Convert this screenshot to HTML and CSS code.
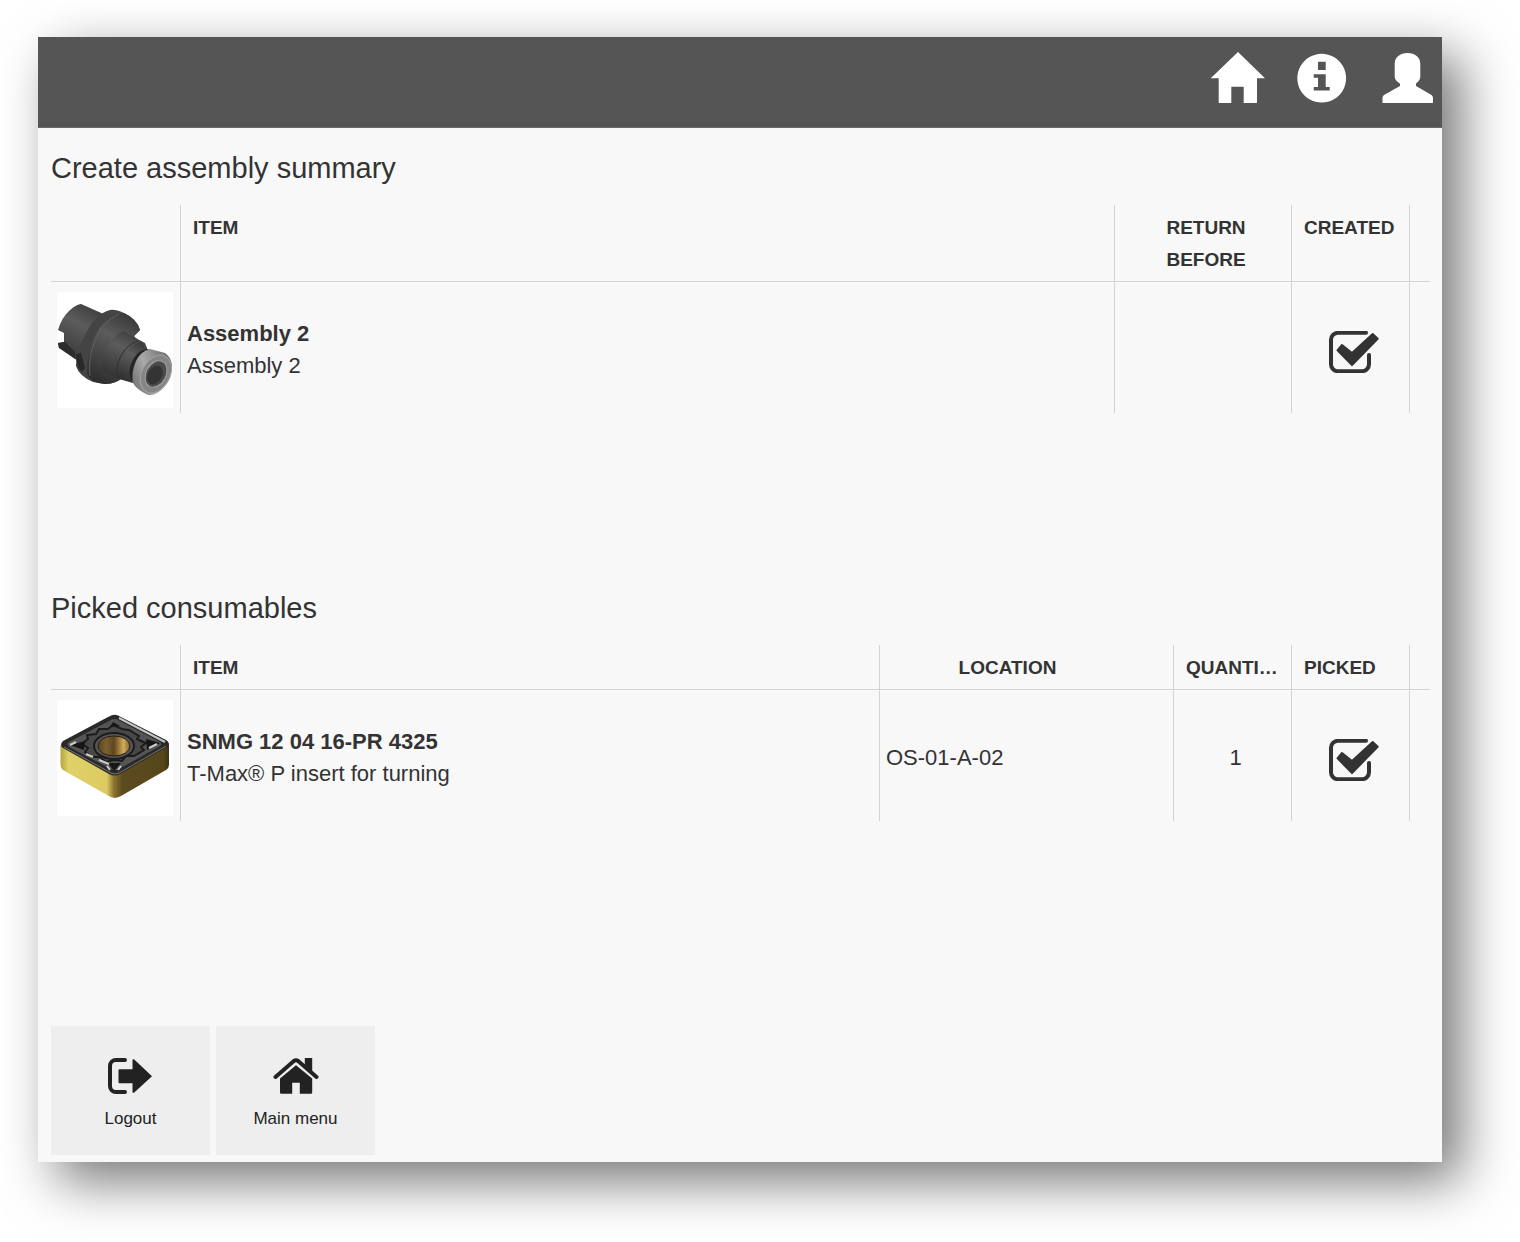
FILE: index.html
```html
<!DOCTYPE html>
<html lang="en">
  <head>
    <meta charset="UTF-8" />
    <meta name="viewport" content="width=device-width, initial-scale=1.0" />
    <title>Create assembly summary</title>
    <link rel="stylesheet" href="styles.css" />
  </head>
  <body>
    <div class="panel">
      <header class="topbar">
        <a href="#" aria-label="Home">
          <svg width="54" height="52" viewBox="0 0 54 52">
            <path d="M28 0L55 26.300H47V51H33.700V34.700H21.300V51H8.700V26.300H.7z" />
          </svg>
        </a>
        <a href="#" aria-label="Information">
          <svg width="50" height="52" viewBox="0 0 50 52">
            <path
              fill-rule="evenodd"
              d="M23.700 1.800a24.400 24.400 0 1 0 .01 0zM20 9.800h7.700V18H20zM15.700 22.300h12V35h4v3.400h-16V35H20v-9.300h-4.300z"
            />
          </svg>
        </a>
        <a href="#" aria-label="User">
          <svg width="51" height="52" viewBox="0 0 51 52">
            <path
              d="M25.500 1C33 1 38.300 5 38.300 12V24C38.300 28 36 30 34 31.500V34L49.500 43Q51 44 51 46V51H.5V46Q.5 44 2 43L18 34V31.500C15.500 30 12.700 28 12.700 24V12C12.700 5 18 1 25.500 1z"
            />
          </svg>
        </a>
      </header>

      <main class="content">
        <section class="summary">
          <h2>Create assembly summary</h2>
          <table>
            <colgroup>
              <col class="col-image" />
              <col />
              <col class="col-return" />
              <col class="col-check" />
              <col class="col-end" />
            </colgroup>
            <thead>
              <tr>
                <th></th>
                <th>ITEM</th>
                <th class="center">RETURN BEFORE</th>
                <th>CREATED</th>
                <th></th>
              </tr>
            </thead>
            <tbody>
              <tr>
                <td>
                  <svg class="picture" viewBox="0 0 116 116" role="img" aria-label="Assembly 2">
                    <defs>
                      <linearGradient id="steel" x1="0.7" y1="0" x2="0.3" y2="1">
                        <stop offset="0" stop-color="#393939" />
                        <stop offset="0.35" stop-color="#5c5c5c" />
                        <stop offset="1" stop-color="#2e2e2e" />
                      </linearGradient>
                      <linearGradient id="ring" x1="0" y1="0.7" x2="1" y2="0.2">
                        <stop offset="0" stop-color="#777" />
                        <stop offset="0.4" stop-color="#aaa" />
                        <stop offset="1" stop-color="#666" />
                      </linearGradient>
                    </defs>
                    <path fill="url(#steel)" d="M24 12L42 20L56 26L40 80L18 67L17 62L2 56L1 51L7 50V41L1 38Q5 25 12 19Q18 13 24 12z" />
                    <path fill="#2c2c2c" d="M1 51L8 50L18 60V67L2 56z" />
                    <path fill="#444" d="M53 18Q38 22 29 41Q19 60 19 74Q22 84 36 90L48 92Q60 92 67 84L80 48L77 44L83 38Q80 27 67 21Q58 17 53 18z" />
                    <path fill="url(#steel)" d="M60 22Q46 27 37 46Q29 65 30 82Q34 91 48 92Q60 92 67 84L80 48L77 44L83 38Q80 27 67 21z" />
                    <path fill="none" stroke="#5e5e5e" d="M62 22Q47 28 38 48Q31 66 33 84" />
                    <path fill="#292929" d="M19 62L24 61L28 76L25 80Q19 76 19 62z" />
                    <path fill="url(#steel)" d="M66 39L88 51L90 56L76 90L69 88L59 86L46 79Q42 72 48 59Q55 44 66 39z" />
                    <path fill="none" stroke="#303030" d="M81 49Q66 54 61 71Q58 80 61 87" />
                    <path fill="url(#steel)" d="M84 50Q70 54 65 68Q60 79 62 87L76 91L91 58z" />
                    <path fill="#252525" d="M92 57Q80 57 74 72Q71 81 74 87L78 91L80 73z" />
                    <path fill="url(#ring)" d="M93 57Q84 59 79 69Q74 80 76 91Q79 97 90 102.500Q98 105 106 96Q114 85 115 73Q114 65 108 61z" />
                    <ellipse cx="99" cy="82" rx="14" ry="20" transform="rotate(28 99 82)" fill="#858585" stroke="#a2a2a2" />
                    <ellipse cx="99" cy="82" rx="10" ry="14" transform="rotate(28 99 82)" fill="#4a4a4a" stroke="#a2a2a2" />
                    <ellipse cx="98" cy="83" rx="7" ry="10" transform="rotate(28 98 83)" fill="#343434" />
                  </svg>
                </td>
                <td><strong>Assembly 2</strong><br />Assembly 2</td>
                <td></td>
                <td class="center">
                  <label class="check">
                    <input type="checkbox" aria-label="Created" checked />
                    <svg width="50" height="42" viewBox="0 0 50 42">
                      <path class="box" d="M37 1.800H9A7 7 0 0 0 2 9V33A7 7 0 0 0 9 40.200H33A7 7 0 0 0 40 33V24" />
                      <path class="tick" d="M13 14L23 22L43.700 3L48.700 7.700L23 34L8.500 19.300z" />
                    </svg>
                  </label>
                </td>
                <td></td>
              </tr>
            </tbody>
          </table>
        </section>

        <section class="summary">
          <h2>Picked consumables</h2>
          <table>
            <colgroup>
              <col class="col-image" />
              <col />
              <col class="col-location" />
              <col class="col-check" />
              <col class="col-check" />
              <col class="col-end" />
            </colgroup>
            <thead>
              <tr>
                <th></th>
                <th>ITEM</th>
                <th class="location">LOCATION</th>
                <th class="cut">QUANTITY</th>
                <th>PICKED</th>
                <th></th>
              </tr>
            </thead>
            <tbody>
              <tr>
                <td>
                  <svg class="picture" viewBox="0 0 116 116" role="img" aria-label="Turning insert">
                    <defs>
                      <linearGradient id="gold-left" x1="0" y1="0" x2="1" y2="0">
                        <stop offset="0" stop-color="#b9a642" />
                        <stop offset="0.15" stop-color="#dfd068" />
                        <stop offset="0.85" stop-color="#dccb62" />
                        <stop offset="1" stop-color="#806624" />
                      </linearGradient>
                      <linearGradient id="gold-right" x1="0" y1="0" x2="1" y2="0">
                        <stop offset="0" stop-color="#8a7234" />
                        <stop offset="0.15" stop-color="#5d4b20" />
                        <stop offset="0.9" stop-color="#554719" />
                        <stop offset="1" stop-color="#3b3218" />
                      </linearGradient>
                      <linearGradient id="bore" x1="0" y1="0" x2="1" y2="0">
                        <stop offset="0" stop-color="#5a451c" />
                        <stop offset="0.25" stop-color="#7b6130" />
                        <stop offset="0.5" stop-color="#60461f" />
                        <stop offset="0.8" stop-color="#d2ac58" />
                        <stop offset="1" stop-color="#7c6228" />
                      </linearGradient>
                    </defs>
                    <path fill="url(#gold-left)" d="M3.500 45L58 74V98Q54 98 50 95L6 70Q3.500 68 3.500 65z" />
                    <path fill="url(#gold-right)" d="M57 74L112 43V65Q112 68 109 70L64 96Q60 98 57 98z" />
                    <path fill="#292929" d="M52 16.500Q57 13.500 62 16L109 40Q114 43 110 47L63 74Q58 77 52 74L6 48Q2 45 6 41z" />
                    <path fill="#555" d="M54 20Q57 18 61 20L103 42Q106 44 103 46L62 69Q58 71 54 69L12 47Q9 44 12 42z" />
                    <path fill="none" stroke="#c4c4c4" stroke-width="2" d="M62 18L108 42" />
                    <path fill="none" stroke="#777" d="M7 47L54 73Q58 75 62 73L109 46" />
                    <path fill="#484848" stroke="#1c1c1c" stroke-width="2" d="M42 29L51 29L56 25L65 29L72 30L82 36L80 39L89 43L84 47L87 50L77 56L69 56L65 61L57 60L49 62L43 57L35 57L28 52L31 48L25 44L31 39L30 35L39 34z" />
                    <path fill="#161616" d="M56 22L63 26L53 27zM13 45L28 41L27 50zM103 43L89 39L90 50zM57 71L51 63L64 63z" />
                    <path fill="none" stroke="#ccc" stroke-width="2" d="M29 54L36 57M42 60L52 64M50 66L53 70M64 66L61 70M13 45L19 42M92 48L100 44" />
                    <ellipse cx="57" cy="46" rx="20" ry="13" fill="#555" stroke="#1c1c1c" stroke-width="2" />
                    <ellipse cx="57" cy="46" rx="16" ry="10" fill="url(#bore)" stroke="#2b2112" />
                  </svg>
                </td>
                <td><strong>SNMG 12 04 16-PR 4325</strong><br />T-Max® P insert for turning</td>
                <td>OS-01-A-02</td>
                <td class="center">1</td>
                <td class="center">
                  <label class="check">
                    <input type="checkbox" aria-label="Picked" checked />
                    <svg width="50" height="42" viewBox="0 0 50 42">
                      <path class="box" d="M37 1.800H9A7 7 0 0 0 2 9V33A7 7 0 0 0 9 40.200H33A7 7 0 0 0 40 33V24" />
                      <path class="tick" d="M13 14L23 22L43.700 3L48.700 7.700L23 34L8.500 19.300z" />
                    </svg>
                  </label>
                </td>
                <td></td>
              </tr>
            </tbody>
          </table>
        </section>

        <div class="actions">
          <button type="button">
            <svg width="46" height="36" viewBox="0 0 46 36">
              <path class="line" d="M17 2H8A6 6 0 0 0 2 8V28A6 6 0 0 0 8 34H17" />
              <path d="M10.500 12.300Q10.500 11.300 11.500 11.300H24.500V1.500L26 1.300L44 18.300L26 34.700L24.500 34.500V25.300H11.500Q10.500 25.300 10.500 24.300z" />
            </svg>
            Logout
          </button>
          <button type="button">
            <svg width="46" height="36" viewBox="0 0 46 36">
              <path class="line" d="M2.500 19L20.800 3Q23 1.500 25.200 3L43.500 19" />
              <path d="M31.800 0H39.200V14L31.800 8zM23 7.300L39.200 20.500V34.500Q39.200 35.700 38 35.700H26.800V24.700H19.200V35.700H8.200Q7 35.700 7 34.500V20.500z" />
            </svg>
            Main menu
          </button>
        </div>
      </main>
    </div>
  </body>
</html>
```
FILE: styles.css
```css
* {
  box-sizing: border-box;
}

body {
  margin: 0;
  padding: 37px 78px 80px 38px;
  font-family: "Liberation Sans", Arial, Helvetica, sans-serif;
  font-size: 22px;
  line-height: 32px;
  color: #333;
  background: #fff;
}

.panel {
  background: #f8f8f8;
  box-shadow: 19px 19px 50px rgba(0, 0, 0, 0.54);
}

/* Top bar */
.topbar {
  display: flex;
  justify-content: flex-end;
  gap: 34px;
  height: 91px;
  padding: 15px 9px 0;
  background: #555;
  border-bottom: 1px solid #6e696b;
}
.topbar svg {
  display: block;
  overflow: visible;
  fill: #fff;
}

.content {
  padding: 18px 12px 7px 13px;
}

/* Tables */
.summary {
  min-height: 440px;
}
.summary h2 {
  margin: 0 0 17px;
  padding-top: 2px;
  font-size: 29px;
  font-weight: 400;
  line-height: 40px;
}
table {
  width: 100%;
  table-layout: fixed;
  border-spacing: 0;
}
.col-image {
  width: 130px;
}
.col-return {
  width: 177px;
}
.col-location {
  width: 294px;
}
.col-check {
  width: 118px;
}
.col-end {
  width: 20px;
}
th,
td {
  border-right: 1px solid #d3d3d3;
}
th:last-child,
td:last-child {
  border-right: 0;
}
th {
  padding: 7px 6px 5px 12px;
  border-bottom: 1px solid #d3d3d3;
  font-size: 19px;
  text-align: left;
  vertical-align: top;
}
td {
  padding: 9px 6px 5px;
  border-top: 1px solid #f8f8f8;
}
th.center,
td.center {
  padding-left: 12px;
  text-align: center;
}
th.location {
  padding-right: 50px;
  text-align: center;
}
.cut {
  padding-right: 11px;
  overflow: hidden;
  text-overflow: ellipsis;
  white-space: nowrap;
}
.picture {
  display: block;
  width: 116px;
  height: 116px;
  background: #fff;
}

/* Tick boxes */
.check {
  display: inline-block;
  position: relative;
  margin-top: 3px;
  vertical-align: middle;
}
.check input {
  position: absolute;
  inset: 0;
  width: 100%;
  height: 100%;
  margin: 0;
  opacity: 0;
}
.check svg {
  display: block;
}
.box {
  fill: none;
  stroke: #333;
  stroke-width: 4;
  stroke-linecap: round;
}
.tick {
  fill: #333;
  stroke: #333;
  stroke-width: 2;
  stroke-linejoin: round;
}
.check input:not(:checked) + svg .tick {
  display: none;
}

/* Bottom buttons */
.actions {
  display: flex;
  gap: 6px;
}
.actions button {
  display: flex;
  flex-direction: column;
  align-items: center;
  gap: 13px;
  width: 159px;
  height: 129px;
  padding: 32px 0 0;
  border: 0;
  background: #eee;
  color: #222;
  font-family: inherit;
  font-size: 17px;
  line-height: 24px;
}
.actions svg {
  fill: #222;
}
.actions .line {
  fill: none;
  stroke: #222;
  stroke-width: 4;
  stroke-linecap: round;
}
```
